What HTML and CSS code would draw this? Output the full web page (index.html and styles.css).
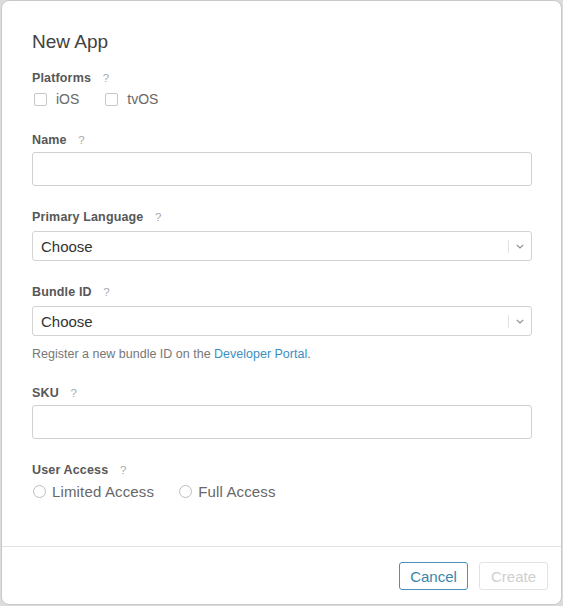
FILE: index.html
```html
<!DOCTYPE html>
<html lang="en">
<head>
<meta charset="utf-8">
<title>New App</title>
<link rel="stylesheet" href="styles.css">
</head>
<body>
<div class="modal">
  <div class="modal-body">
    <h1 class="title">New App</h1>

    <div class="field field-platforms">
      <div class="label">Platforms <span class="help">?</span></div>
      <div class="options">
        <label class="option"><span class="checkbox"></span><span class="check-text">iOS</span></label>
        <label class="option"><span class="checkbox"></span><span class="check-text">tvOS</span></label>
      </div>
    </div>

    <div class="field">
      <div class="label">Name <span class="help">?</span></div>
      <div class="input"></div>
    </div>

    <div class="field">
      <div class="label label-select">Primary Language <span class="help">?</span></div>
      <div class="select">
        <span class="select-text">Choose</span>
        <span class="select-arrow"><svg width="8" height="5" viewBox="0 0 8 5"><path d="M0.8 0.8 L4 4 L7.2 0.8" fill="none" stroke="#8a8a8a" stroke-width="1.1"/></svg></span>
      </div>
    </div>

    <div class="field field-bundle">
      <div class="label label-select">Bundle ID <span class="help">?</span></div>
      <div class="select">
        <span class="select-text">Choose</span>
        <span class="select-arrow"><svg width="8" height="5" viewBox="0 0 8 5"><path d="M0.8 0.8 L4 4 L7.2 0.8" fill="none" stroke="#8a8a8a" stroke-width="1.1"/></svg></span>
      </div>
      <p class="hint">Register a new bundle ID on the <a class="link" href="#">Developer Portal</a>.</p>
    </div>

    <div class="field">
      <div class="label">SKU <span class="help">?</span></div>
      <div class="input"></div>
    </div>

    <div class="field">
      <div class="label">User Access <span class="help">?</span></div>
      <div class="options options-radio">
        <label class="option"><span class="radio"></span><span class="radio-text">Limited Access</span></label>
        <label class="option"><span class="radio"></span><span class="radio-text">Full Access</span></label>
      </div>
    </div>
  </div>

  <div class="modal-footer">
    <button class="btn btn-cancel">Cancel</button>
    <button class="btn btn-create" disabled>Create</button>
  </div>
</div>
</body>
</html>
```

FILE: styles.css
```css
* { box-sizing: border-box; }

html, body {
  margin: 0;
  padding: 0;
}

body {
  background: #dcdcdc;
  width: 563px;
  height: 606px;
  overflow: hidden;
  font-family: "Liberation Sans", Arial, Helvetica, sans-serif;
}

.modal {
  margin: 0 1px;
  height: 605px;
  background: #fff;
  border: 1px solid #c9c9c9;
  border-radius: 8px;
  display: flex;
  flex-direction: column;
}

.modal-body {
  flex: 1;
  padding: 29px 29px 0 30px;
}

.title {
  margin: 0 0 15px;
  font-size: 19px;
  line-height: 24px;
  font-weight: normal;
  color: #414141;
}

.field {
  margin-bottom: 22px;
}

.field-platforms {
  margin-bottom: 23px;
}

.label {
  font-size: 12.5px;
  line-height: 16px;
  padding-top: 1px;
  height: 16px;
  font-weight: bold;
  letter-spacing: 0.15px;
  color: #575757;
  margin-bottom: 5px;
}

.label-select {
  margin-bottom: 7px;
}

.help {
  font-weight: normal;
  color: #a8a8a8;
  font-size: 11.5px;
  letter-spacing: 0;
  margin-left: 8px;
}

.options {
  display: flex;
  gap: 26px;
  height: 18px;
  align-items: center;
  padding-left: 2px;
}

.options-radio {
  gap: 25px;
  padding-left: 1px;
}

.option {
  display: flex;
  align-items: center;
}

.checkbox {
  width: 13px;
  height: 13px;
  border: 1px solid #c8c8c8;
  border-radius: 2px;
  margin-right: 9px;
  background: #fff;
}

.check-text {
  font-size: 14px;
  color: #686868;
}

.radio {
  width: 13px;
  height: 13px;
  border: 1px solid #bdbdbd;
  border-radius: 50%;
  margin-right: 6px;
  background: #fff;
}

.radio-text {
  font-size: 15px;
  letter-spacing: 0.15px;
  color: #686868;
}

.input {
  height: 34px;
  border: 1px solid #d0d0d0;
  border-radius: 3px;
  background: #fff;
}

.select {
  height: 30px;
  border: 1px solid #d3d3d3;
  border-radius: 3px;
  display: flex;
  align-items: center;
  padding-left: 8px;
}

.select-text {
  flex: 1;
  font-size: 15px;
  color: #333;
}

.select-arrow {
  width: 23px;
  height: 13px;
  border-left: 1px solid #e2e2e2;
  display: flex;
  align-items: center;
  justify-content: center;
}

.select-arrow svg {
  display: block;
}

.field-bundle {
  margin-bottom: 22px;
}

.hint {
  margin: 10px 0 0;
  font-size: 12.5px;
  line-height: 16px;
  color: #777;
}

.link {
  color: #3b8fc1;
  text-decoration: none;
}

.modal-footer {
  height: 58px;
  border-top: 1px solid #e3e3e3;
  display: flex;
  justify-content: flex-end;
  align-items: flex-start;
  gap: 11px;
  padding: 15px 13px 0 0;
}

.btn {
  height: 28px;
  font-family: "Liberation Sans", Arial, Helvetica, sans-serif;
  font-size: 15px;
  background: #fff;
  border-radius: 3px;
  padding: 0;
  cursor: pointer;
}

.btn-cancel {
  width: 69px;
  border: 1px solid #4a93b3;
  color: #3a86a8;
}

.btn-create {
  width: 69px;
  border: 1px solid #e3e3e3;
  color: #cfcfcf;
}
```
